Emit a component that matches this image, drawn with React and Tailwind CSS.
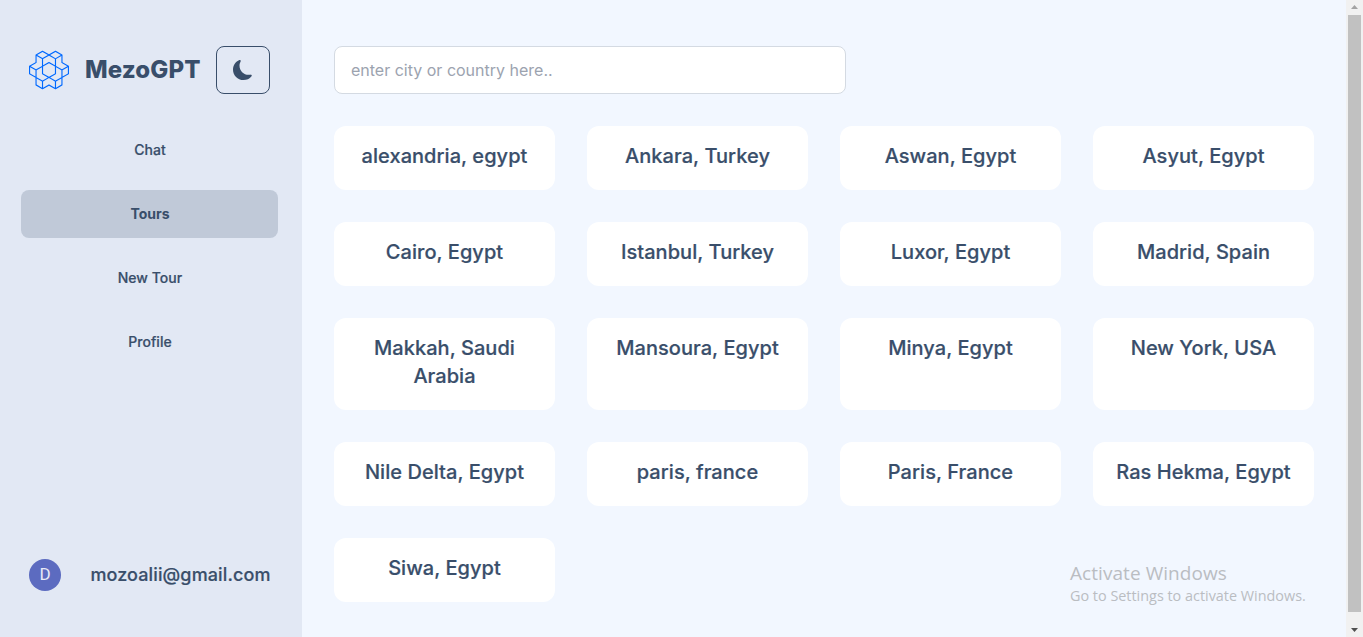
import { SiOpenaigym } from "react-icons/si";
import { BsMoonFill } from "react-icons/bs";

const tours = [
  "alexandria, egypt", "Ankara, Turkey", "Aswan, Egypt", "Asyut, Egypt",
  "Cairo, Egypt", "Istanbul, Turkey", "Luxor, Egypt", "Madrid, Spain",
  "Makkah, Saudi Arabia", "Mansoura, Egypt", "Minya, Egypt", "New York, USA",
  "Nile Delta, Egypt", "paris, france", "Paris, France", "Ras Hekma, Egypt",
  "Siwa, Egypt",
];

const links = ["Chat", "Tours", "New Tour", "Profile"];

function Sidebar() {
  return (
    <aside className="flex w-[302px] shrink-0 flex-col bg-[#e2e8f4] pt-[46px] pb-[46px]">
      <div className="flex h-12 items-center pl-[29px]">
        <SiOpenaigym className="size-10 shrink-0 text-[#0069ff]" />
        <h2 className="ml-4 w-[115px] whitespace-nowrap text-2xl font-extrabold tracking-[0.12px]">MezoGPT</h2>
        <button className="ml-4 flex h-12 w-[54px] shrink-0 items-center justify-center rounded-lg border border-[#394e6a]">
          <BsMoonFill className="size-5" />
        </button>
      </div>
      <nav className="mt-8 flex flex-col gap-4 pr-6 pl-[21px]">
        {links.map((label) => (
          <a
            key={label}
            className={
              label === "Tours"
                ? "flex h-12 items-center justify-center rounded-lg bg-[#c0c9d8] pl-px text-sm font-bold"
                : "flex h-12 items-center justify-center rounded-lg pl-px text-sm font-medium tracking-[0.04px] [-webkit-text-stroke:0.2px]"
            }
          >
            {label}
          </a>
        ))}
      </nav>
      <div className="mt-auto flex h-8 items-center pl-[29px]">
        <div className="flex size-8 items-center justify-center rounded-full bg-[#5c6bc0] font-['Roboto',sans-serif] text-[17px] text-[#e8eaf6]">
          D
        </div>
        <p className="ml-[29.4px] text-lg font-medium tracking-[0.12px] [-webkit-text-stroke:0.2px]">mozoalii@gmail.com</p>
      </div>
    </aside>
  );
}

function Scrollbar() {
  return (
    <div className="flex w-[17px] shrink-0 flex-col items-center bg-[#f1f1f1]">
      <svg className="h-[15px] w-[17px] shrink-0" viewBox="0 0 17 15">
        <path d="M5 9h7L8.500 5z" fill="#a3a3a3" />
      </svg>
      <div className="w-[13px] flex-1 bg-[#c1c1c1]" />
      <svg className="h-[25px] w-[17px] shrink-0" viewBox="0 0 17 25">
        <path d="M5 16h7L8.500 20z" fill="#505050" />
      </svg>
    </div>
  );
}

export default function App() {
  return (
    <div className="relative flex h-[637px] w-full overflow-hidden bg-[#f2f7ff] font-['Inter',sans-serif] text-[#394e6a]">
      <Sidebar />
      <main className="min-w-0 flex-1 px-8 pt-[46px]">
        <input
          type="text"
          placeholder="enter city or country here.."
          className="block h-12 w-[512px] rounded-lg border border-[#d4dae2] bg-white px-4 text-base placeholder:text-[#9ca3af]"
        />
        <div className="mt-8 grid grid-cols-4 gap-8">
          {tours.map((name) => (
            <div key={name} className="rounded-xl bg-white px-4 pt-4 pb-5">
              <h3 className="text-center text-xl font-medium tracking-[0.05px] [-webkit-text-stroke:0.2px]">{name}</h3>
            </div>
          ))}
        </div>
      </main>
      <Scrollbar />
      <div className="absolute top-[560px] left-[1070px] whitespace-nowrap font-['Open_Sans',sans-serif] text-[#babdc2]">
        <p className="text-[19px] leading-[26px] tracking-[0.06px]">Activate Windows</p>
        <p className="text-[14.4px] leading-5">Go to Settings to activate Windows.</p>
      </div>
    </div>
  );
}
